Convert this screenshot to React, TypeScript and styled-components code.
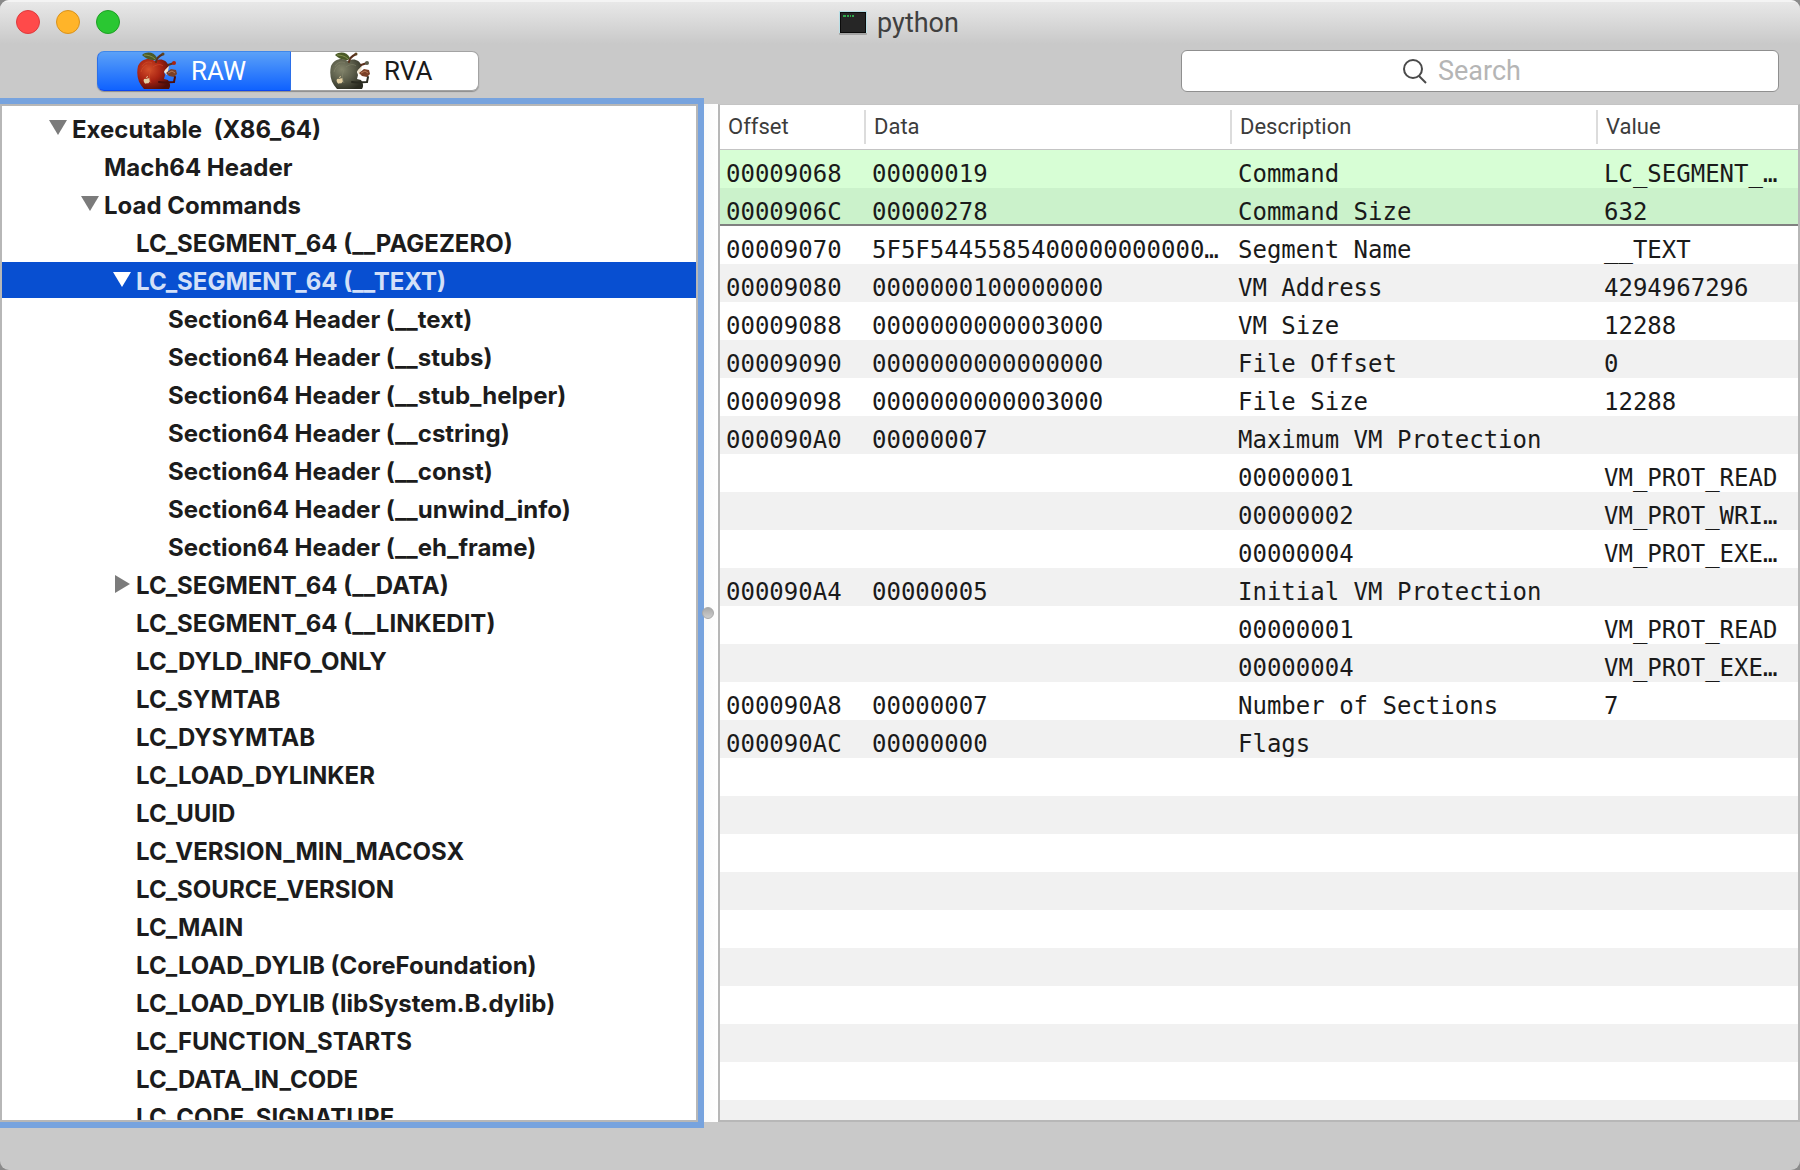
import React, { useState } from "react";
import styled, { createGlobalStyle, css } from "styled-components";

const UI_FONT = `Inter, "Liberation Sans", sans-serif`;
const LABEL_FONT = `Roboto, "Liberation Sans", sans-serif`;
const MONO_FONT = `"DejaVu Sans Mono", "Liberation Mono", monospace`;

const GlobalStyle = createGlobalStyle`
  *, *::before, *::after { box-sizing: border-box; }
  body { margin: 0; background: #8a8a8a; font-family: ${UI_FONT}; color: #1c1c1c; }
  button, input { font: inherit; color: inherit; }
`;

const Window = styled.div`
  display: flex;
  flex-direction: column;
  height: 100vh;
  overflow: hidden;
  border-radius: 9px;
  background: #c9c9c9;
`;

const Chrome = styled.header`
  flex: none;
  height: 104px;
  border-top: 2px solid #f4f4f4;
  background: linear-gradient(#e8e8e8, #c9c9c9 42px);
`;

const TitleBar = styled.div`
  display: grid;
  grid-template-columns: 1fr auto 1fr;
  align-items: center;
  height: 40px;
  padding: 0 16px;
`;

const Lights = styled.div`
  display: flex;
  gap: 16px;
`;

const Light = styled.button<{ $fill: string; $edge: string }>`
  width: 24px;
  height: 24px;
  padding: 0;
  border: 1px solid ${(p) => p.$edge};
  border-radius: 50%;
  background: ${(p) => p.$fill};
`;

const Title = styled.h1`
  display: flex;
  align-items: center;
  gap: 10px;
  margin: 0;
  padding: 2px 2px 0 0;
  font: 400 27px/32px ${LABEL_FONT};
  color: #404040;
`;

const Toolbar = styled.div`
  display: flex;
  align-items: center;
  justify-content: space-between;
  height: 58px;
  padding: 0 21px 0 97px;
`;

const Segments = styled.div`
  display: flex;
  height: 40px;
  border-radius: 7px;
  box-shadow: 0 1px 1px #8c8c8c;
`;

const Segment = styled.button<{ $on: boolean }>`
  display: flex;
  align-items: center;
  gap: 14px;
  width: 188px;
  height: 40px;
  padding: 0 0 0 39px;
  border: 1px solid #a3a3a3;
  border-left-width: 0;
  border-radius: 0 7px 7px 0;
  background: #fff;
  font: 400 26px/36px ${LABEL_FONT};
  color: #1a1a1a;
  &:first-child {
    width: 194px;
    border-left-width: 1px;
    border-radius: 7px 0 0 7px;
  }
  ${(p) =>
    p.$on &&
    css`
      border-color: #3f87ea #2b6fe8 #0b46ef;
      background: linear-gradient(#5ba1f8, #0f62ff);
      color: #fff;
    `}
`;

const SearchBox = styled.label`
  display: flex;
  align-items: center;
  justify-content: center;
  gap: 10px;
  width: 598px;
  height: 42px;
  border: 1px solid #8f8f8f;
  border-radius: 6px;
  background: #fff;
`;

const SearchInput = styled.input`
  width: 120px;
  padding: 0;
  border: 0;
  outline: 0;
  background: none;
  font: 400 27px/32px ${LABEL_FONT};
  &::placeholder { color: #b5b5b5; opacity: 1; }
`;

const Panes = styled.main`
  flex: 1;
  display: flex;
  min-height: 0;
`;

const TreePane = styled.nav`
  position: relative;
  z-index: 1;
  flex: none;
  width: 698px;
  overflow: hidden;
  padding-top: 4px;
  border: 2px solid #b7b7b7;
  background: #fff;
  box-shadow: 0 0 0 6px rgba(37, 126, 243, 0.5);
`;

const Tree = styled.ul`
  display: flex;
  flex-direction: column;
  gap: 2px;
  margin: 0;
  padding: 0;
  list-style: none;
`;

const TreeRow = styled.li<{ $depth: number; $selected: boolean }>`
  flex: none;
  display: flex;
  align-items: center;
  height: 36px;
  padding-left: ${(p) => 47 + p.$depth * 32}px;
  font-size: 24px;
  line-height: 32px;
  font-weight: 700;
  white-space: pre;
  color: ${(p) => (p.$selected ? "#d3e0f8" : "#1c1c1c")};
  background: ${(p) => (p.$selected ? "#084fd1" : "none")};
`;

const NodeLabel = styled.span`
  padding-top: 4px;
`;

const Disclosure = styled.button<{ $selected: boolean }>`
  display: flex;
  align-items: center;
  width: 23px;
  height: 36px;
  padding: 0;
  border: 0;
  background: none;
  color: ${(p) => (p.$selected ? "#fff" : "#7b7b7b")};
`;

const DisclosureGap = styled.span`
  width: 23px;
`;

const Splitter = styled.div`
  z-index: 2;
  flex: none;
  display: flex;
  align-items: center;
  width: 20px;
  padding-left: 4px;
  background: linear-gradient(90deg, transparent 6px, #fafafa 6px, #fff);
`;

const Grip = styled.span`
  width: 12px;
  height: 12px;
  border: 1px solid #a9a9a9;
  border-radius: 50%;
  background: linear-gradient(#a9a9a9, #cdcdcd);
`;

const DataPane = styled.section`
  flex: 1;
  min-width: 0;
  overflow: hidden;
  border: 2px solid #b7b7b7;
  border-top: 1px solid #c4c4c4;
  background: repeating-linear-gradient(#fff 0 38px, #f1f1f1 38px 76px) 0 45px;
`;

const Table = styled.table`
  width: 100%;
  table-layout: fixed;
  border-collapse: separate;
  border-spacing: 0;
`;

const HeadCell = styled.th<{ $width?: number }>`
  width: ${(p) => (p.$width ? `${p.$width}px` : "auto")};
  height: 45px;
  padding: 0;
  border-bottom: 1px solid #c4c4c4;
  background: #fff;
  text-align: left;
  font: 400 22px/34px ${LABEL_FONT};
  color: #3c3c3c;
`;

const HeadLabel = styled.div`
  padding-left: 8px;
  border-right: 2px solid #dcdcdc;
  ${HeadCell}:last-child & { border-right: 0; }
`;

const BodyRow = styled.tr<{ $tone?: "light" | "dark" }>`
  background: ${(p) => (p.$tone === "light" ? "#d7fed5" : p.$tone === "dark" ? "#cbf2cb" : "none")};
`;

const Cell = styled.td<{ $ruled: boolean }>`
  height: 38px;
  padding: ${(p) => (p.$ruled ? "12px 10px 0 6px" : "12px 10px 2px 6px")};
  border-bottom: ${(p) => (p.$ruled ? "2px solid #808080" : "0")};
  overflow: hidden;
  text-overflow: ellipsis;
  white-space: nowrap;
  font: 400 24px/24px ${MONO_FONT};
  color: #1a1a1a;
`;

const Footer = styled.footer`
  flex: none;
  height: 48px;
`;

type Node = { depth: number; label: string; state?: "open" | "closed" };

const NODES: Node[] = [
  { depth: 0, label: "Executable  (X86_64)", state: "open" },
  { depth: 1, label: "Mach64 Header" },
  { depth: 1, label: "Load Commands", state: "open" },
  { depth: 2, label: "LC_SEGMENT_64 (__PAGEZERO)" },
  { depth: 2, label: "LC_SEGMENT_64 (__TEXT)", state: "open" },
  { depth: 3, label: "Section64 Header (__text)" },
  { depth: 3, label: "Section64 Header (__stubs)" },
  { depth: 3, label: "Section64 Header (__stub_helper)" },
  { depth: 3, label: "Section64 Header (__cstring)" },
  { depth: 3, label: "Section64 Header (__const)" },
  { depth: 3, label: "Section64 Header (__unwind_info)" },
  { depth: 3, label: "Section64 Header (__eh_frame)" },
  { depth: 2, label: "LC_SEGMENT_64 (__DATA)", state: "closed" },
  { depth: 2, label: "LC_SEGMENT_64 (__LINKEDIT)" },
  { depth: 2, label: "LC_DYLD_INFO_ONLY" },
  { depth: 2, label: "LC_SYMTAB" },
  { depth: 2, label: "LC_DYSYMTAB" },
  { depth: 2, label: "LC_LOAD_DYLINKER" },
  { depth: 2, label: "LC_UUID" },
  { depth: 2, label: "LC_VERSION_MIN_MACOSX" },
  { depth: 2, label: "LC_SOURCE_VERSION" },
  { depth: 2, label: "LC_MAIN" },
  { depth: 2, label: "LC_LOAD_DYLIB (CoreFoundation)" },
  { depth: 2, label: "LC_LOAD_DYLIB (libSystem.B.dylib)" },
  { depth: 2, label: "LC_FUNCTION_STARTS" },
  { depth: 2, label: "LC_DATA_IN_CODE" },
  { depth: 2, label: "LC_CODE_SIGNATURE" },
];

const ROWS: string[][] = [
  ["00009068", "00000019", "Command", "LC_SEGMENT_64"],
  ["0000906C", "00000278", "Command Size", "632"],
  ["00009070", "5F5F5445585400000000000000000000", "Segment Name", "__TEXT"],
  ["00009080", "0000000100000000", "VM Address", "4294967296"],
  ["00009088", "0000000000003000", "VM Size", "12288"],
  ["00009090", "0000000000000000", "File Offset", "0"],
  ["00009098", "0000000000003000", "File Size", "12288"],
  ["000090A0", "00000007", "Maximum VM Protection", ""],
  ["", "", "00000001", "VM_PROT_READ"],
  ["", "", "00000002", "VM_PROT_WRITE"],
  ["", "", "00000004", "VM_PROT_EXECUTE"],
  ["000090A4", "00000005", "Initial VM Protection", ""],
  ["", "", "00000001", "VM_PROT_READ"],
  ["", "", "00000004", "VM_PROT_EXECUTE"],
  ["000090A8", "00000007", "Number of Sections", "7"],
  ["000090AC", "00000000", "Flags", ""],
];

function Triangle({ open }: { open: boolean }) {
  return (
    <svg width="18" height="18" viewBox="0 0 18 18" aria-hidden="true">
      <path d={open ? "M0 1h18L9 16z" : "M2 0l15 9-15 9z"} fill="currentColor" />
    </svg>
  );
}

function AppleIcon({ tint }: { tint: "red" | "green" }) {
  const c =
    tint === "red"
      ? { hi: "#d4502b", mid: "#a92312", lo: "#4d0d08" }
      : { hi: "#84856c", mid: "#5b5d4a", lo: "#2a2b20" };
  const id = `skin-${tint}`;
  return (
    <svg width="40" height="38" viewBox="0 0 40 38" aria-hidden="true">
      <defs>
        <radialGradient id={id} cx="0.35" cy="0.35" r="0.75">
          <stop offset="0" stopColor={c.hi} />
          <stop offset="0.5" stopColor={c.mid} />
          <stop offset="1" stopColor={c.lo} />
        </radialGradient>
      </defs>
      <path
        d="M18 9C12 5 4 7 1 14c-2 9 0 17 6 23h25c2-3 1-6-1-9l-4-1 1-4-1-3c2-3 4-4 5-6-3-7-9-8-14-5z"
        fill={`url(#${id})`}
      />
      <path d="M5 14c3-4 7-5 10-3M4 20c1-4 3-6 6-7M16 15c4-3 8-3 10-1M14 18c-2 4-2 9 0 13" fill="none" stroke={c.hi} strokeWidth="1" opacity="0.6" />
      <path d="M32 14c-2 2-4 3-5 6l3 3 1-4z" fill="#f2e6d0" />
      <path d="M29 21l5-4 5 1 1 4-3 3-5-1z" fill="#7a4027" />
      <path d="M31 21l4-2 3 2" fill="none" stroke="#b87956" strokeWidth="1" />
      <path d="M22 30c5 1 10 0 15 0l1-5" fill="none" stroke={c.lo} strokeWidth="2" strokeLinecap="round" />
      <path d="M31 13l6-2M19 10c0-4 3-6 7-8" fill="none" stroke="#59301c" strokeWidth="2" strokeLinecap="round" />
      <circle cx="37" cy="11" r="2" fill={c.mid} />
      <circle cx="26" cy="2" r="1.5" fill="#5d4422" />
      <path d="M18 8C12 8 8 6 5 3c5-4 12-3 15 3z" fill="#4b5a28" />
      <path d="M7 3c4 0 8 1 11 4" fill="none" stroke="#82904a" strokeWidth="1" />
      <path d="M9 27c-2-1-3 1-2 3s2 2 3 1c1 1 2 0 3-2-1-1-1-2 0-2-1-1-2-1-4 0zm0-1c0-1 1-2 2-2 0 1-1 2-2 2z" fill="#e3cfa1" />
    </svg>
  );
}

function TerminalIcon() {
  return (
    <svg width="28" height="24" viewBox="0 0 28 24" aria-hidden="true">
      <rect x="0" y="1" width="28" height="23" rx="1" fill="#a4a4a4" />
      <rect x="0" y="0" width="28" height="22" fill="#b9dfe6" />
      <rect x="1" y="1" width="26" height="21" fill="#0b0b0b" />
      <rect x="2" y="2" width="24" height="19" fill="#262626" />
      <path d="M4 5h3M8 5h2M11 5h1M13 5h2" stroke="#2fa84c" strokeWidth="2" />
    </svg>
  );
}

function Magnifier() {
  return (
    <svg width="26" height="26" viewBox="0 0 26 26" fill="none" stroke="#4a4a4a" strokeWidth="2" aria-hidden="true">
      <circle cx="11" cy="11" r="9" />
      <path d="M17 18l7 7" />
    </svg>
  );
}

export default function App() {
  const [mode, setMode] = useState("RAW");
  const [selected, setSelected] = useState(4);
  return (
    <Window>
      <GlobalStyle />
      <Chrome>
        <TitleBar>
          <Lights>
            <Light aria-label="Close" $fill="#ff4a4a" $edge="#de3a3d" />
            <Light aria-label="Minimize" $fill="#ffb429" $edge="#d9921c" />
            <Light aria-label="Zoom" $fill="#2ac732" $edge="#1ea024" />
          </Lights>
          <Title>
            <TerminalIcon />
            python
          </Title>
        </TitleBar>
        <Toolbar>
          <Segments>
            <Segment $on={mode === "RAW"} aria-pressed={mode === "RAW"} onClick={() => setMode("RAW")}>
              <AppleIcon tint="red" />
              RAW
            </Segment>
            <Segment $on={mode === "RVA"} aria-pressed={mode === "RVA"} onClick={() => setMode("RVA")}>
              <AppleIcon tint="green" />
              RVA
            </Segment>
          </Segments>
          <SearchBox>
            <Magnifier />
            <SearchInput type="text" placeholder="Search" aria-label="Search" />
          </SearchBox>
        </Toolbar>
      </Chrome>
      <Panes>
        <TreePane aria-label="File structure">
          <Tree role="tree">
            {NODES.map((n, i) => (
              <TreeRow
                key={n.label}
                role="treeitem"
                aria-level={n.depth + 1}
                aria-selected={i === selected}
                aria-expanded={n.state ? n.state === "open" : undefined}
                $depth={n.depth}
                $selected={i === selected}
                onClick={() => setSelected(i)}
              >
                {n.state ? (
                  <Disclosure $selected={i === selected} aria-label={`Toggle ${n.label}`}>
                    <Triangle open={n.state === "open"} />
                  </Disclosure>
                ) : (
                  <DisclosureGap />
                )}
                <NodeLabel>{n.label}</NodeLabel>
              </TreeRow>
            ))}
          </Tree>
        </TreePane>
        <Splitter role="separator" aria-orientation="vertical">
          <Grip />
        </Splitter>
        <DataPane aria-label="Segment contents">
          <Table>
            <thead>
              <tr>
                <HeadCell $width={146}><HeadLabel>Offset</HeadLabel></HeadCell>
                <HeadCell $width={366}><HeadLabel>Data</HeadLabel></HeadCell>
                <HeadCell $width={366}><HeadLabel>Description</HeadLabel></HeadCell>
                <HeadCell><HeadLabel>Value</HeadLabel></HeadCell>
              </tr>
            </thead>
            <tbody>
              {ROWS.map((r, i) => (
                <BodyRow key={i} $tone={i === 0 ? "light" : i === 1 ? "dark" : undefined}>
                  {r.map((text, c) => (
                    <Cell key={c} $ruled={i === 1}>{text}</Cell>
                  ))}
                </BodyRow>
              ))}
            </tbody>
          </Table>
        </DataPane>
      </Panes>
      <Footer />
    </Window>
  );
}
